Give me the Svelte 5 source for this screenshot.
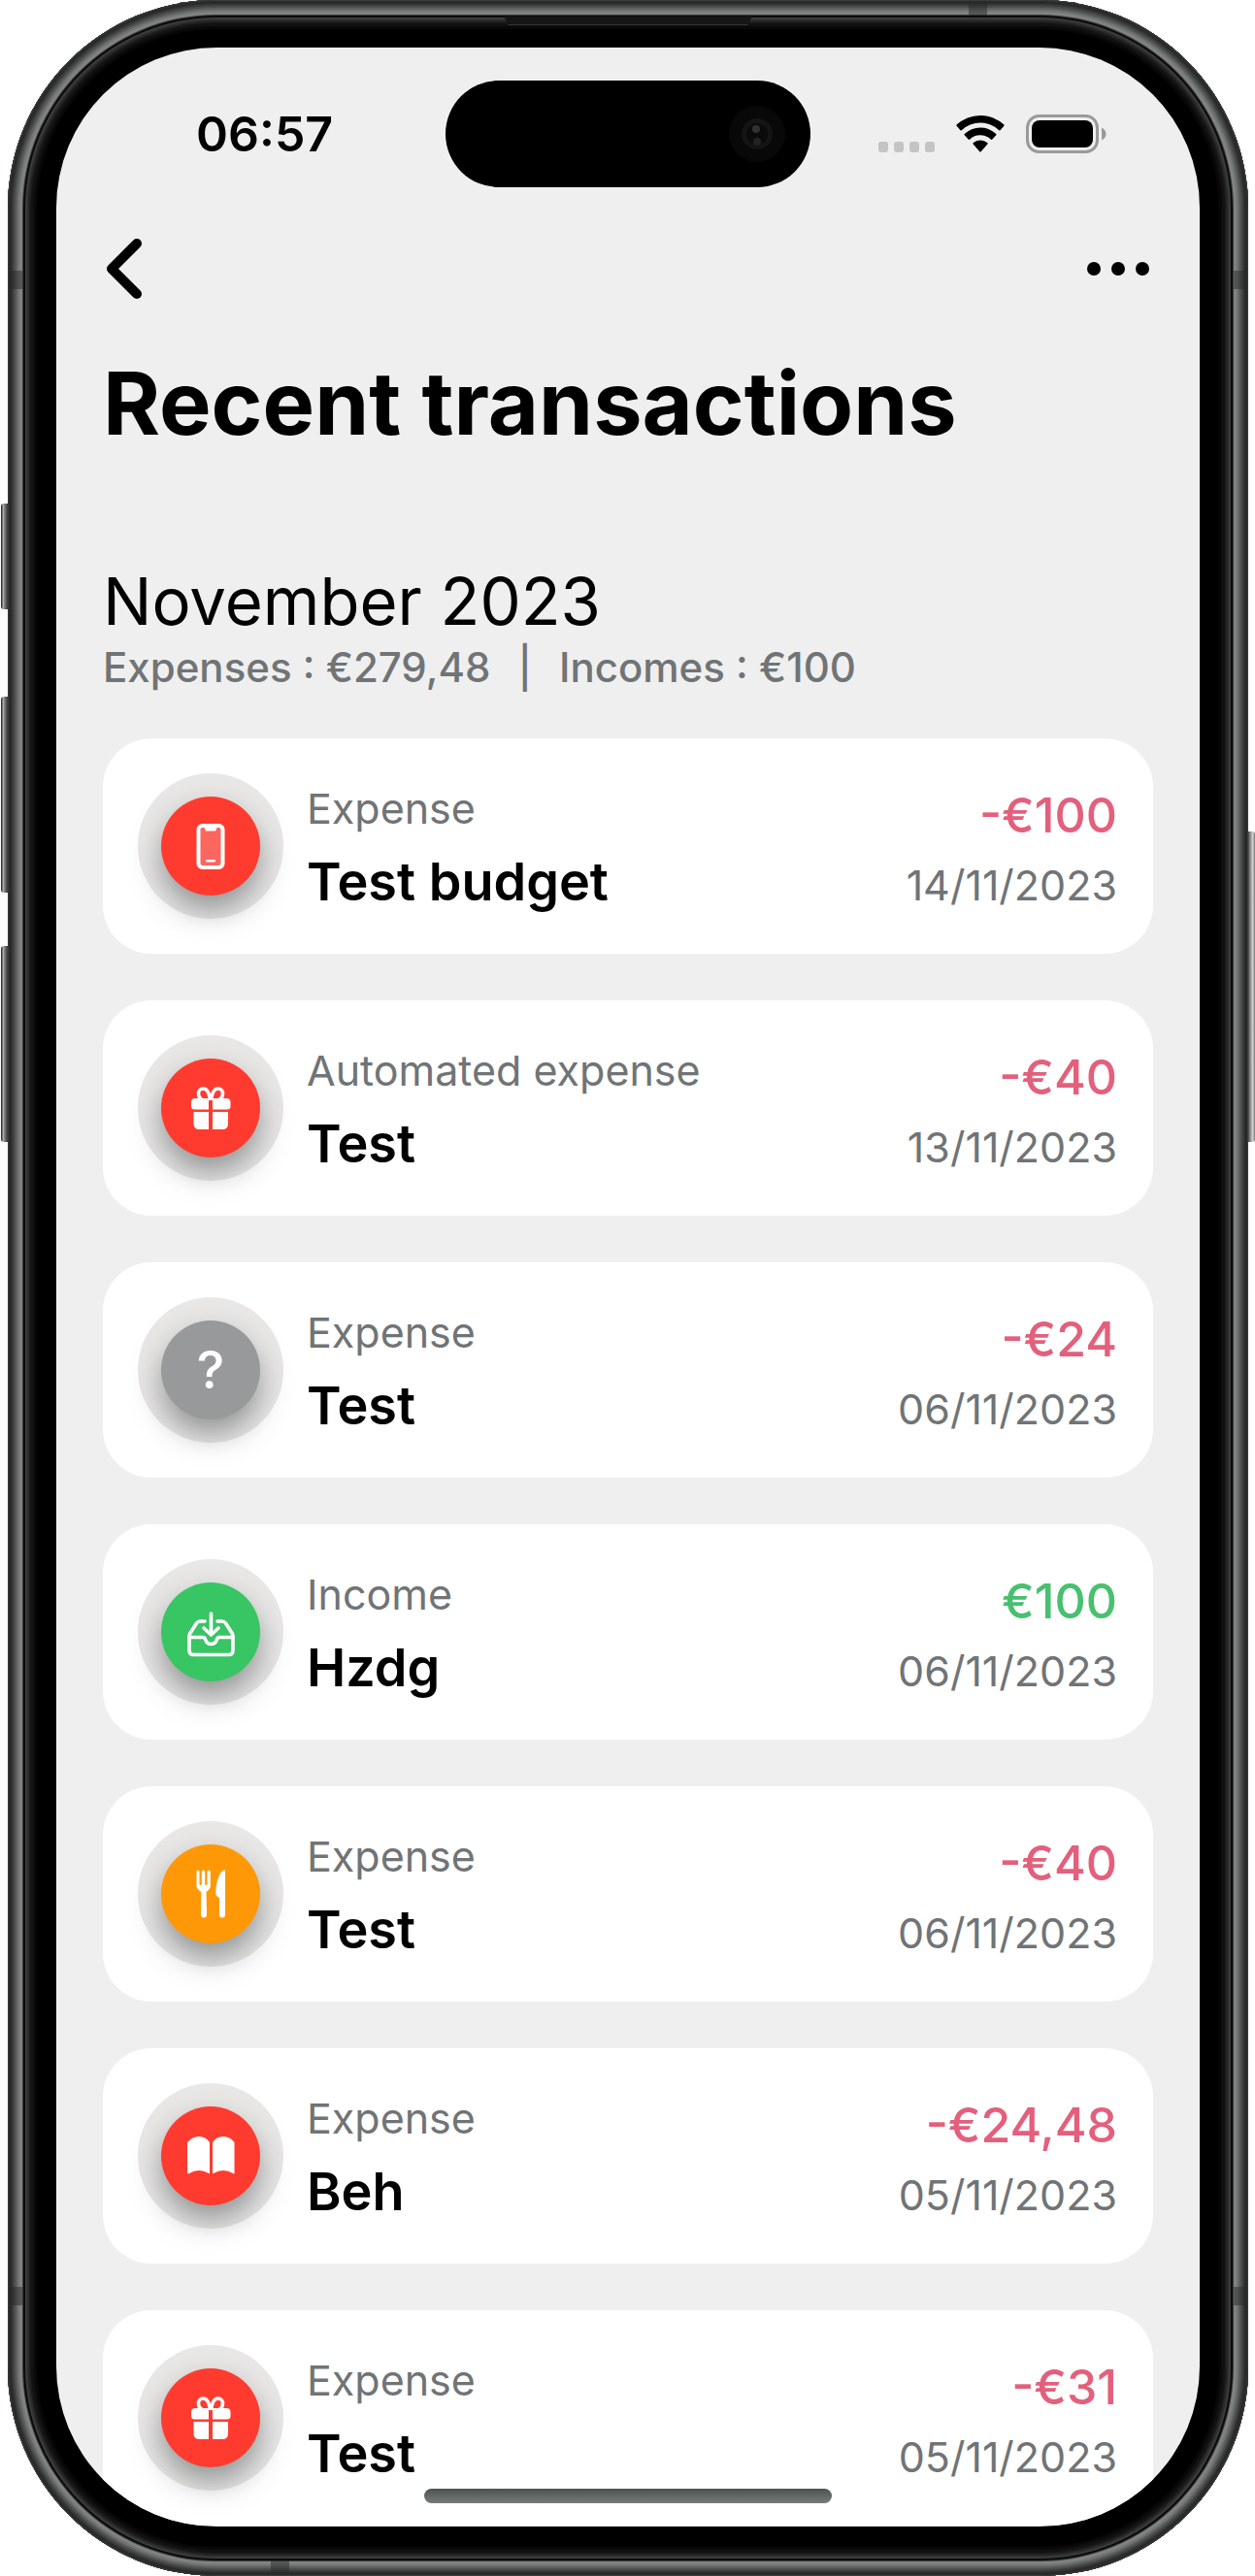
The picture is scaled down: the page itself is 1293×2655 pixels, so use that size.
<script>
  const transactions = [
    { kind: 'Expense', name: 'Test budget', amount: '-€100', date: '14/11/2023', icon: 'phone', tone: 'red' },
    { kind: 'Automated expense', name: 'Test', amount: '-€40', date: '13/11/2023', icon: 'gift', tone: 'red' },
    { kind: 'Expense', name: 'Test', amount: '-€24', date: '06/11/2023', icon: 'unknown', tone: 'gray' },
    { kind: 'Income', name: 'Hzdg', amount: '€100', date: '06/11/2023', icon: 'inbox', tone: 'green' },
    { kind: 'Expense', name: 'Test', amount: '-€40', date: '06/11/2023', icon: 'food', tone: 'orange' },
    { kind: 'Expense', name: 'Beh', amount: '-€24,48', date: '05/11/2023', icon: 'book', tone: 'red' },
    { kind: 'Expense', name: 'Test', amount: '-€31', date: '05/11/2023', icon: 'gift', tone: 'red' }
  ];
</script>

<div class="device">
  <span class="key key-action"></span>
  <span class="key key-up"></span>
  <span class="key key-down"></span>
  <span class="key key-power"></span>

  <div class="body">
    <span class="band band-top"></span>
    <span class="band band-bottom"></span>
    <span class="band side left upper"></span>
    <span class="band side left lower"></span>
    <span class="band side right upper"></span>
    <span class="band side right lower"></span>
    <span class="speaker"></span>

    <main class="screen">
      <div class="status">
        <time class="clock">06:57</time>
        <div class="island">
          <svg width="60" height="60" viewBox="0 0 60 60" aria-hidden="true">
            <circle cx="30" cy="30" r="29" fill="#080808" />
            <circle cx="30" cy="30" r="16" fill="#141414" />
            <circle cx="30" cy="30" r="11" fill="#0b0b0b" />
            <circle cx="29" cy="25" r="4" fill="#303030" />
            <circle cx="30" cy="38" r="4" fill="#232323" />
          </svg>
        </div>
        <div class="signals">
          <svg width="58" height="40" viewBox="0 0 58 40" fill="#c4c4c4" aria-hidden="true">
            <rect x="0" y="28" width="10" height="11" rx="3" />
            <rect x="16" y="28" width="10" height="11" rx="3" />
            <rect x="32" y="28" width="10" height="11" rx="3" />
            <rect x="48" y="28" width="10" height="11" rx="3" />
          </svg>
          <svg width="50" height="40" viewBox="0 0 50 40" aria-hidden="true">
            <path d="M0.6 10.6A35.5 35.5 0 0 1 49.4 10.6Q50 11.200 49.400 11.800L45.500 16.300Q44.900 16.900 44.300 16.300A28 28 0 0 0 5.700 16.300Q5.100 16.900 4.500 16.300L0.600 11.800Q0 11.200 0.600 10.600Z" />
            <path d="M8.700 20A23.500 23.500 0 0 1 41.300 20Q41.900 20.600 41.300 21.200L37.200 25.700Q36.600 26.300 36 25.700A16 16 0 0 0 14 25.700Q13.400 26.300 12.800 25.700L8.700 21.200Q8.100 20.600 8.700 20Z" />
            <path d="M17.600 29.200A11.500 11.500 0 0 1 32.400 29.200Q33 29.800 32.400 30.400L25.700 38.300Q25 39 24.300 38.300L17.600 30.400Q17 29.800 17.600 29.200Z" />
          </svg>
          <svg width="83" height="40" viewBox="0 0 83 40" aria-hidden="true">
            <rect x="1.500" y="1.500" width="72" height="37" rx="12" fill="none" stroke="#9a9a9a" stroke-width="3" />
            <rect x="6" y="6" width="63" height="28" rx="8" />
            <path d="M78 13.500Q82.500 16 82.500 20T78 26.500Z" fill="#9a9a9a" />
          </svg>
        </div>
      </div>

      <header>
        <nav>
          <button type="button" aria-label="Back">
            <svg width="44" height="72" viewBox="0 0 44 72" fill="none" stroke="#000" stroke-width="10" stroke-linecap="round" stroke-linejoin="round">
              <path d="M35 10L9 36L35 62" />
            </svg>
          </button>
          <button type="button" aria-label="More options">
            <svg width="68" height="72" viewBox="0 0 68 72">
              <circle cx="7" cy="36" r="7" /><circle cx="32" cy="36" r="7" /><circle cx="57" cy="36" r="7" />
            </svg>
          </button>
        </nav>
        <h1>Recent transactions</h1>
      </header>

      <section>
        <h2>November 2023</h2>
        <p class="totals"><span>Expenses : €279,48</span><span>|</span><span>Incomes : €100</span></p>

        <ul>
          {#each transactions as t}
            <li>
              <div class="ring">
                <div class="badge {t.tone}">
                  {#if t.icon === 'unknown'}
                    <span class="mark">?</span>
                  {:else}
                    <svg width="102" height="102" viewBox="0 0 102 102" fill="#fff" aria-hidden="true">
                      {#if t.icon === 'phone'}
                        <rect x="38.500" y="30" width="25" height="43" rx="4" fill="#fb665f" stroke="#fff" stroke-width="4" />
                        <path d="M44 31H58L56 35.500H46Z" />
                        <rect x="46" y="65" width="10" height="2.500" rx="1" />
                      {:else if t.icon === 'gift'}
                        <g fill="none" stroke="#fff" stroke-width="3.600">
                          <path d="M50.500 43C49.500 35 47 31 43.500 31C40 31 38.500 33.500 38.500 36C38.500 39 40.500 42 43.500 43" />
                          <path d="M51.500 43C52.500 35 55 31 58.500 31C62 31 63.500 33.500 63.500 36C63.500 39 61.500 42 58.500 43" />
                        </g>
                        <path d="M35 41H49V52.500H34.500Q31 52.500 31 49V45Q31 41 35 41ZM53 41H67.500Q71.500 41 71.500 45V49Q71.500 52.500 68 52.500H53Z" />
                        <path d="M33.500 55H49V73H39.500Q33.500 73 33.500 67ZM53 55H69V67Q69 73 63 73H53Z" />
                      {:else if t.icon === 'inbox'}
                        <g fill="none" stroke="#fff" stroke-width="3.600" stroke-linecap="round" stroke-linejoin="round">
                          <path d="M45 40H40Q38 40 36.500 42L29.500 53Q29 54 29 56V70Q29 74.500 33.500 74.500H69.500Q74 74.500 74 70V56Q74 54 73.500 53L66.500 42Q65 40 63 40H58" />
                          <path d="M29 56.500H43Q45 56.500 45.500 58.500Q47 63.500 51.500 63.500T57.500 58.500Q58 56.500 60 56.500H74" />
                          <path d="M51.500 32V53M44 47L51.500 54L59 47" />
                        </g>
                      {:else if t.icon === 'food'}
                        <path d="M36.500 28Q36.500 26.500 38 26.500T39.500 28V41Q39.500 42 40.500 42T41.800 41V28Q41.800 26.500 43.500 26.500T45.200 28V41Q45.200 42 46.200 42T47.500 41V28Q47.500 26.500 49 26.500T50.800 28V43Q50.800 46 46.500 49L47 72Q47 75.500 44 75.500T41 72L41.300 49Q36.500 46 36.500 43Z" />
                        <path d="M66 28V72Q66 75.500 63 75.500T60 72V55Q56 53 56.200 50Q56.500 37 61.500 29Q66 24 66 28Z" />
                      {:else}
                        <path d="M27 37Q32 31 39 31T50 37V68.500Q50 69.500 49 69Q39 63 29 69Q27 70 27 68.500Z" />
                        <path d="M53 37Q57 31 64 31T75.500 37V68.500Q75.500 70 74 69Q64 63 54 69Q53 69.500 53 68.500Z" />
                      {/if}
                    </svg>
                  {/if}
                </div>
              </div>
              <div class="what">
                <span class="kind">{t.kind}</span>
                <strong>{t.name}</strong>
              </div>
              <div class="sum">
                <span class="amount" class:income={t.kind === 'Income'}>{t.amount}</span>
                <time>{t.date}</time>
              </div>
            </li>
          {/each}
        </ul>
      </section>
      <span class="home"></span>
    </main>
  </div>
</div>

<style>
  :global(body) {
    margin: 0;
    background: #fff;
  }
  .device {
    position: relative;
    padding: 0 7px 0 8px;
    font-family: Inter, 'Liberation Sans', sans-serif;
    color: #000;
  }
  .body {
    position: relative;
    padding: 49px 50px 51px;
    border-radius: 215px;
    background: #000;
    box-shadow:
      inset 0 0 0 1px #3a3b3b,
      inset 0 0 0 4px #292a2a,
      inset 0 0 0 6px #393a3a,
      inset 0 0 0 8px #4b4d4d,
      inset 0 0 0 10px #5e6060,
      inset 0 0 0 12px #727474,
      inset 0 0 0 15px #808282,
      inset 0 0 0 16px #3d3f3f,
      inset 0 0 0 18px #0b0b0b,
      inset 0 0 0 20px #3a3b3b,
      inset 0 0 0 22px #2c2c2c,
      inset 0 0 0 24px #1c1c1c,
      inset 0 0 0 27px #111,
      inset 0 0 0 30px #080808;
  }
  .key {
    position: absolute;
    width: 10px;
    border-radius: 3px;
    background: linear-gradient(90deg, #333 0 1px, #bbb 2px, #777 4px, #222 8px);
  }
  .key-action { left: 1px; top: 519px; height: 109px; }
  .key-up { left: 1px; top: 718px; height: 202px; }
  .key-down { left: 1px; top: 975px; height: 202px; }
  .key-power {
    right: 0;
    top: 857px;
    height: 320px;
    background: linear-gradient(270deg, #888 0 1px, #ddd 2px, #888 5px, #222 8px);
  }
  .band {
    position: absolute;
    width: 19px;
    height: 14px;
    background: rgba(40, 42, 42, 0.5);
  }
  .band-top { right: 269px; top: 2px; }
  .band-bottom { left: 271px; bottom: 2px; }
  .side { width: 14px; height: 19px; }
  .left { left: 1px; }
  .right { right: 1px; }
  .upper { top: 279px; }
  .lower { bottom: 279px; }
  .speaker {
    position: absolute;
    top: 17px;
    left: 50%;
    width: 256px;
    height: 9px;
    margin-left: -128px;
    background: #161616;
    border-bottom: 1px solid #333;
    box-sizing: border-box;
    clip-path: polygon(0 0, 100% 0, 98% 100%, 2% 100%);
  }
  .screen {
    position: relative;
    display: block;
    overflow: hidden;
    border-radius: 165px;
    padding: 34px 48px 1px;
    background: #efefef;
  }
  .status {
    display: grid;
    grid-template-columns: 1fr 376px 1fr;
    align-items: center;
  }
  .clock {
    padding-left: 96px;
    font-size: 50px;
    line-height: 60px;
    font-weight: 600;
  }
  .island {
    display: flex;
    align-items: center;
    justify-content: flex-end;
    height: 110px;
    padding-right: 25px;
    box-sizing: border-box;
    border-radius: 55px;
    background: #000;
  }
  .signals {
    display: flex;
    justify-content: flex-end;
    gap: 22px;
    padding-right: 48px;
  }
  svg { display: block; }
  nav {
    display: flex;
    justify-content: space-between;
    align-items: center;
    margin-top: 48px;
  }
  button {
    padding: 0;
    border: 0;
    background: none;
    cursor: pointer;
  }
  h1 {
    margin: 48px 0 0;
    font-size: 90px;
    line-height: 110px;
    font-weight: 700;
    white-space: nowrap;
  }
  h2 {
    margin: 109px 0 0;
    font-size: 67px;
    line-height: 80px;
    font-weight: 400;
  }
  .totals {
    display: flex;
    gap: 28px;
    margin: 0;
    font-size: 42px;
    line-height: 56px;
    font-weight: 500;
    color: #707476;
  }
  ul {
    display: grid;
    gap: 48px;
    margin: 45px 0 0;
    padding: 0;
    list-style: none;
  }
  li {
    display: flex;
    align-items: center;
    height: 222px;
    padding: 0 37px 0 36px;
    box-sizing: border-box;
    border-radius: 50px;
    background: #fff;
  }
  .ring {
    display: grid;
    place-items: center;
    flex: none;
    width: 150px;
    height: 150px;
    border-radius: 50%;
    background: #e9e8e7;
  }
  .badge {
    display: grid;
    place-items: center;
    width: 102px;
    height: 102px;
    border-radius: 50%;
    box-shadow: 0 15px 30px rgba(60, 65, 65, 0.5);
  }
  .red { background: #ff3b30; }
  .gray { background: #98999b; }
  .green { background: #38c564; }
  .orange { background: #ff9807; }
  .mark {
    color: #fff;
    font-size: 54px;
    line-height: 60px;
    font-weight: 500;
  }
  .what,
  .sum {
    display: flex;
    flex-direction: column;
  }
  .what {
    flex: 1;
    gap: 14px;
    padding-left: 24px;
  }
  .kind,
  .sum time {
    font-size: 43px;
    line-height: 60px;
    color: #707476;
  }
  strong {
    font-size: 54px;
    line-height: 64px;
    font-weight: 600;
  }
  .sum {
    align-items: flex-end;
    gap: 12px;
    padding-top: 8px;
  }
  .amount {
    font-size: 50px;
    line-height: 60px;
    font-weight: 500;
    color: #e3607c;
  }
  .income { color: #48c06f; }
  .home {
    position: absolute;
    bottom: 24px;
    left: 50%;
    width: 420px;
    height: 15px;
    margin-left: -210px;
    border-radius: 8px;
    background: linear-gradient(#4e5151, #777b7b);
  }
</style>
